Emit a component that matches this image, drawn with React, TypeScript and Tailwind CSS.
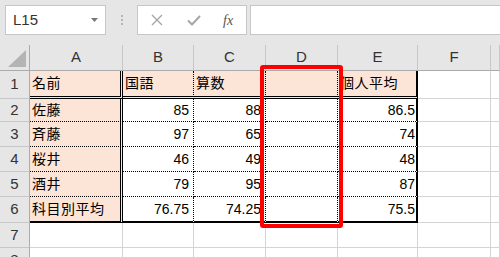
import React from "react";

type Cell = string | number;

const table: Cell[][] = [
  ["名前", "国語", "算数", "", "個人平均"],
  ["佐藤", 85, 88, "", 86.5],
  ["斉藤", 97, 65, "", 74],
  ["桜井", 46, 49, "", 48],
  ["酒井", 79, 95, "", 87],
  ["科目別平均", 76.75, 74.25, "", 75.5],
];

const letters = ["A", "B", "C", "D", "E", "F", ""];

function cellClass(r: number, c: number) {
  // r: 1..8 sheet rows, c: 1..7 sheet columns
  const inTable = r >= 1 && r <= 6 && c >= 1 && c <= 5;
  if (!inTable) return "border-r border-b border-[#d4d4d4] bg-white";

  const bg = c === 1 || r === 1 ? "bg-[#fce4d6]" : "bg-white";
  let right = "border-r border-r-black [border-right-style:dotted]";
  if (c === 1) right = "border-r-[3px] border-r-black [border-right-style:double]";
  if (c === 5) right = "border-r-2 border-r-black";
  let bottom = "border-b border-b-black [border-bottom-style:dotted]";
  if (r === 1) bottom = "border-b-[3px] border-b-black [border-bottom-style:double]";
  if (r === 6) bottom = "border-b-2 border-b-black";
  return `${bg} ${right} ${bottom}`;
}

function CellText({ r, c }: { r: number; c: number }) {
  if (r < 1 || r > 6 || c < 1 || c > 5) return null;
  const v = table[r - 1][c - 1];
  if (v === "") return null;
  if (typeof v === "number") {
    return (
      <div className={c === 5 ? "h-full flex items-center justify-end pr-[1px]" : "h-full flex items-center justify-end pr-[4px]"}>
        {v}
      </div>
    );
  }
  return <div className="h-full flex items-center pl-[2px] tracking-[0.5px]">{v}</div>;
}

function NameBox() {
  return (
    <div className="w-[101px] h-[30px] bg-white border border-[#c6c6c6] flex items-center justify-between pl-[7px] pr-[7px]">
      <span className="text-[15px] text-[#333]">L15</span>
      <svg width="7" height="4" viewBox="0 0 7 4">
        <polygon points="0,0 7,0 3.5,4" fill="#777" />
      </svg>
    </div>
  );
}

function FxButtons() {
  return (
    <div className="w-[110px] h-[30px] bg-white border border-[#c6c6c6] flex items-center">
      <svg className="ml-[13px]" width="12" height="12" viewBox="0 0 12 12">
        <path d="M1 1 L11 11 M11 1 L1 11" stroke="#a6a6a6" strokeWidth="1.4" />
      </svg>
      <svg className="ml-[24px]" width="14" height="12" viewBox="0 0 14 12">
        <path d="M1 6.5 L5 10.5 L13 2" stroke="#a6a6a6" strokeWidth="2" fill="none" />
      </svg>
      <span className="ml-[22px] font-['Liberation_Serif',serif] italic text-[14px] text-[#555]">
        fx
      </span>
    </div>
  );
}

export default function App() {
  const rows = [1, 2, 3, 4, 5, 6, 7, 8];
  const cols = [1, 2, 3, 4, 5, 6, 7];

  return (
    <div className="relative w-[500px] h-[257px] overflow-hidden bg-white font-['Liberation_Sans','Noto_Sans_CJK_JP',sans-serif] text-[14px] text-black">
      {/* formula bar */}
      <div className="h-[45px] bg-[#e6e6e6] flex items-start pt-[5px] pl-[5px]">
        <NameBox />
        <div className="w-[31px] h-[30px] flex flex-col items-center justify-center gap-[2px]">
          <div className="w-[2px] h-[2px] bg-[#b4b4b4]" />
          <div className="w-[2px] h-[2px] bg-[#b4b4b4]" />
          <div className="w-[2px] h-[2px] bg-[#b4b4b4]" />
        </div>
        <FxButtons />
        <div className="ml-[3px] flex-1 h-[30px] bg-white border border-[#c6c6c6] border-r-0" />
      </div>

      {/* sheet */}
      <div className="grid grid-cols-[30px_93px_71px_72px_72px_80px_73px_9px] grid-rows-[26px_28px_23px_25px_25px_25px_26px_25px_25px]">
        {/* header row */}
        <div className="relative bg-[#e6e6e6] border-r border-b border-[#ababab]">
          <svg className="absolute right-[3px] bottom-[3px]" width="18" height="17" viewBox="0 0 18 17">
            <polygon points="18,0 18,17 0,17" fill="#b4b4b4" />
          </svg>
        </div>
        {cols.map((c) => (
          <div
            key={c}
            className="bg-[#e6e6e6] border-r border-r-[#c6c6c6] border-b border-b-[#ababab] flex items-center justify-center text-[15px] text-[#333]"
          >
            {letters[c - 1]}
          </div>
        ))}

        {rows.map((r) => (
          <React.Fragment key={r}>
            <div className="bg-[#e6e6e6] border-r border-r-[#ababab] border-b border-b-[#c6c6c6] flex items-center justify-center text-[15px] text-[#333]">
              {r}
            </div>
            {cols.map((c) => (
              <div key={c} className={cellClass(r, c)}>
                <CellText r={r} c={c} />
              </div>
            ))}
          </React.Fragment>
        ))}
      </div>

      {/* highlight around column D */}
      <div className="absolute left-[260px] top-[65px] w-[83px] h-[163px] border-4 border-[#ff0000] rounded-[3px]" />
    </div>
  );
}
